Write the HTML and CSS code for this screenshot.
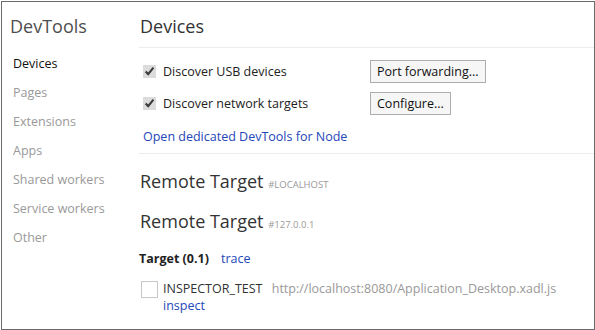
FILE: index.html
```html
<!DOCTYPE html>
<html lang="en">
<head>
    <meta charset="UTF-8">
    <title>DevTools - Devices</title>
    <link rel="stylesheet" href="styles.css">
</head>
<body>
    <div class="window">
        <div class="sidebar">
            <h1 class="sidebar-title">DevTools</h1>
            <ul class="nav">
                <li class="nav-item selected">Devices</li>
                <li class="nav-item">Pages</li>
                <li class="nav-item">Extensions</li>
                <li class="nav-item">Apps</li>
                <li class="nav-item">Shared workers</li>
                <li class="nav-item">Service workers</li>
                <li class="nav-item">Other</li>
            </ul>
        </div>

        <div class="content">
            <h2 class="page-title">Devices</h2>

            <div class="settings">
                <div class="setting-row">
                    <label class="check-label"><input type="checkbox" checked> Discover USB devices</label>
                    <button class="btn">Port forwarding...</button>
                </div>
                <div class="setting-row">
                    <label class="check-label"><input type="checkbox" checked> Discover network targets</label>
                    <button class="btn">Configure...</button>
                </div>
                <a class="link node-link" href="#">Open dedicated DevTools for Node</a>
            </div>

            <h3 class="remote-title">Remote Target <span class="remote-id">#LOCALHOST</span></h3>
            <h3 class="remote-title">Remote Target <span class="remote-id">#127.0.0.1</span></h3>

            <div class="browser">
                <span class="browser-name">Target (0.1)</span>
                <a class="link" href="#">trace</a>
            </div>

            <div class="target">
                <div class="target-icon"></div>
                <div class="target-info">
                    <div>
                        <span class="target-name">INSPECTOR_TEST</span>
                        <span class="target-url">http://localhost:8080/Application_Desktop.xadl.js</span>
                    </div>
                    <a class="link" href="#">inspect</a>
                </div>
            </div>
        </div>
    </div>
</body>
</html>
```

FILE: styles.css
```css
/* General */
* {
    box-sizing: border-box;
}

body {
    margin: 0;
    padding: 1px 0 0 1px;
    font-family: "Open Sans", "Noto Sans", sans-serif;
    font-size: 12.5px;
    color: #222;
    background-color: #fff;
}

.window {
    display: flex;
    width: 594px;
    height: 329px;
    border: 1px solid #6b6b6b;
    overflow: hidden;
}

a {
    text-decoration: none;
}

.link {
    color: #2446b8;
}

/* Sidebar */
.sidebar {
    width: 137px;
    flex-shrink: 0;
}

.sidebar-title {
    margin: 11px 0 0 8px;
    font-size: 18px;
    font-weight: normal;
    color: #4e4e4e;
    line-height: 26px;
}

.nav {
    list-style: none;
    margin: 15px 0 0;
    padding: 0 0 0 11px;
}

.nav-item {
    height: 29px;
    line-height: 19px;
    color: #999;
}

.nav-item.selected {
    color: #111;
}

/* Main content */
.content {
    flex: 1;
}

.page-title {
    margin: 0;
    padding: 11px 0 8px 1px;
    font-size: 18px;
    font-weight: normal;
    color: #333;
    line-height: 26px;
    border-bottom: 1px solid #ececec;
}

.settings {
    padding: 7px 0 7px 4px;
    border-bottom: 1px solid #ececec;
}

.setting-row {
    display: flex;
    align-items: center;
    height: 32px;
}

.check-label {
    display: flex;
    align-items: center;
    width: 227px;
}

.check-label input {
    width: 13px;
    height: 13px;
    margin: 0 7px 0 0;
    accent-color: #dcdcdc;
}

.btn {
    height: 23px;
    padding: 0 6px;
    font-family: inherit;
    font-size: 12.5px;
    color: #111;
    background-color: #f6f6f6;
    border: 1px solid #adadad;
    border-radius: 0;
}

.node-link {
    display: block;
    margin-top: 9px;
    line-height: 18px;
}

.remote-title {
    margin: 14px 0 0 1px;
    font-size: 18px;
    font-weight: normal;
    color: #333;
    line-height: 26px;
}

.remote-id {
    font-size: 9.5px;
    line-height: 1;
    color: #999;
}

.browser {
    margin-top: 16px;
    display: flex;
    gap: 12px;
    line-height: 18px;
}

.browser-name {
    font-weight: bold;
    color: #222;
}

.target {
    display: flex;
    margin-top: 12px;
    padding-left: 2px;
}

.target-icon {
    width: 17px;
    height: 17px;
    border: 1px solid #c8c8c8;
    margin: 1px 5px 0 0;
}

.target-info {
    line-height: 17px;
}

.target-name {
    margin-right: 6px;
    color: #333;
}

.target-url {
    color: #999;
}
```
